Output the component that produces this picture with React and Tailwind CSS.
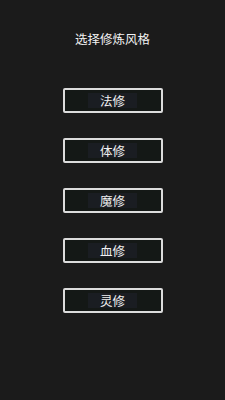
import React from "react";

const items = ["法修", "体修", "魔修", "血修", "灵修"];

export default function App() {
  return (
    <div
      className="w-[225px] h-[400px] bg-[#1b1b1b] flex flex-col items-center"
      style={{ fontFamily: '"Noto Sans CJK SC", "Noto Sans", sans-serif' }}
    >
      <div className="mt-[31px] h-[16px] leading-[16px] text-[12.5px] text-[#f2f2f2]">
        选择修炼风格
      </div>
      <div className="mt-[41px] flex flex-col gap-[25px]">
        {items.map((t) => (
          <div
            key={t}
            className="w-[100px] h-[25px] border-2 border-[#dcdcdc] rounded-[2px] bg-[#141816] flex items-center justify-center"
          >
            <span className="px-[12px] h-[15px] leading-[15px] bg-[#1a1d22] text-[12.5px] text-[#f0f0f0]">
              {t}
            </span>
          </div>
        ))}
      </div>
    </div>
  );
}
